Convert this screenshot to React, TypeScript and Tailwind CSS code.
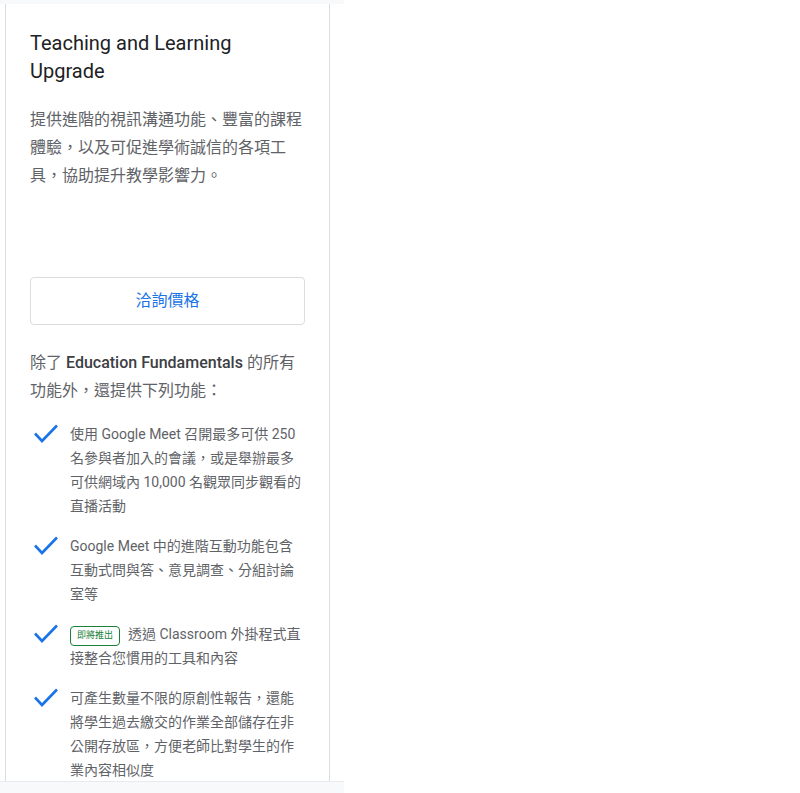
import React from 'react'

const sans = 'font-["Roboto","Noto_Sans_CJK_TC",sans-serif]'

function Check() {
  return (
    <svg viewBox="0 0 24 20" className="w-[24px] h-[20px] shrink-0 mt-[2px]">
      <path d="M1 9.5 L8 17 L23 1.5" fill="none" stroke="#1a73e8" strokeWidth="2.6" strokeLinecap="butt" strokeLinejoin="miter" />
    </svg>
  )
}

function Feature({ children }: { children: React.ReactNode }) {
  return (
    <li className="flex gap-[12px] pl-[4px]">
      <Check />
      <div className="text-[14px] leading-[24px] text-[#5f6368]">{children}</div>
    </li>
  )
}

export default function App() {
  return (
    <div className={`w-[344px] ${sans}`}>
      <div className="h-[4px] bg-[#f8f9fa]" />
      <div className="bg-white pl-[5px] pr-[14px]">
        <div className="h-[777px] overflow-hidden border-x border-[#dadce0] px-[24px] pt-[25px]">
          <h2 className="text-[20px] leading-[28px] text-[#202124] font-normal">
            Teaching and Learning
            <br />
            Upgrade
          </h2>
          <p className="mt-[21px] text-[16px] leading-[28px] text-[#5f6368]">
            提供進階的視訊溝通功能、豐富的課程體驗，以及可促進學術誠信的各項工具，協助提升教學影響力。
          </p>
          <button className="mt-[87px] w-full h-[48px] rounded-[4px] border border-[#dadce0] text-[16px] text-[#1a73e8]">
            洽詢價格
          </button>
          <p className="mt-[24px] text-[16px] leading-[28px] text-[#5f6368]">
            除了 <span className="font-medium text-[#3c4043]">Education Fundamentals</span> 的所有功能外，還提供下列功能：
          </p>
          <ul className="mt-[17px] flex flex-col gap-[16px]">
            <Feature>
              使用 Google Meet 召開最多可供 250 名參與者加入的會議，或是舉辦最多可供網域內 10,000 名觀眾同步觀看的直播活動
            </Feature>
            <Feature>Google Meet 中的進階互動功能包含互動式問與答、意見調查、分組討論室等</Feature>
            <Feature>
              <span className="inline-flex items-center h-[20px] px-[6px] mr-[8px] rounded-[4px] border border-[#188038] text-[9px] text-[#188038] align-[1px] leading-none">
                即將推出
              </span>
              透過 Classroom 外掛程式直接整合您慣用的工具和內容
            </Feature>
            <Feature>
              可產生數量不限的原創性報告，還能將學生過去繳交的作業全部儲存在非公開存放區，方便老師比對學生的作業內容相似度
            </Feature>
          </ul>
        </div>
      </div>
      <div className="h-[12px] bg-[#f8f9fa] border-t border-[#e8eaed]" />
    </div>
  )
}
